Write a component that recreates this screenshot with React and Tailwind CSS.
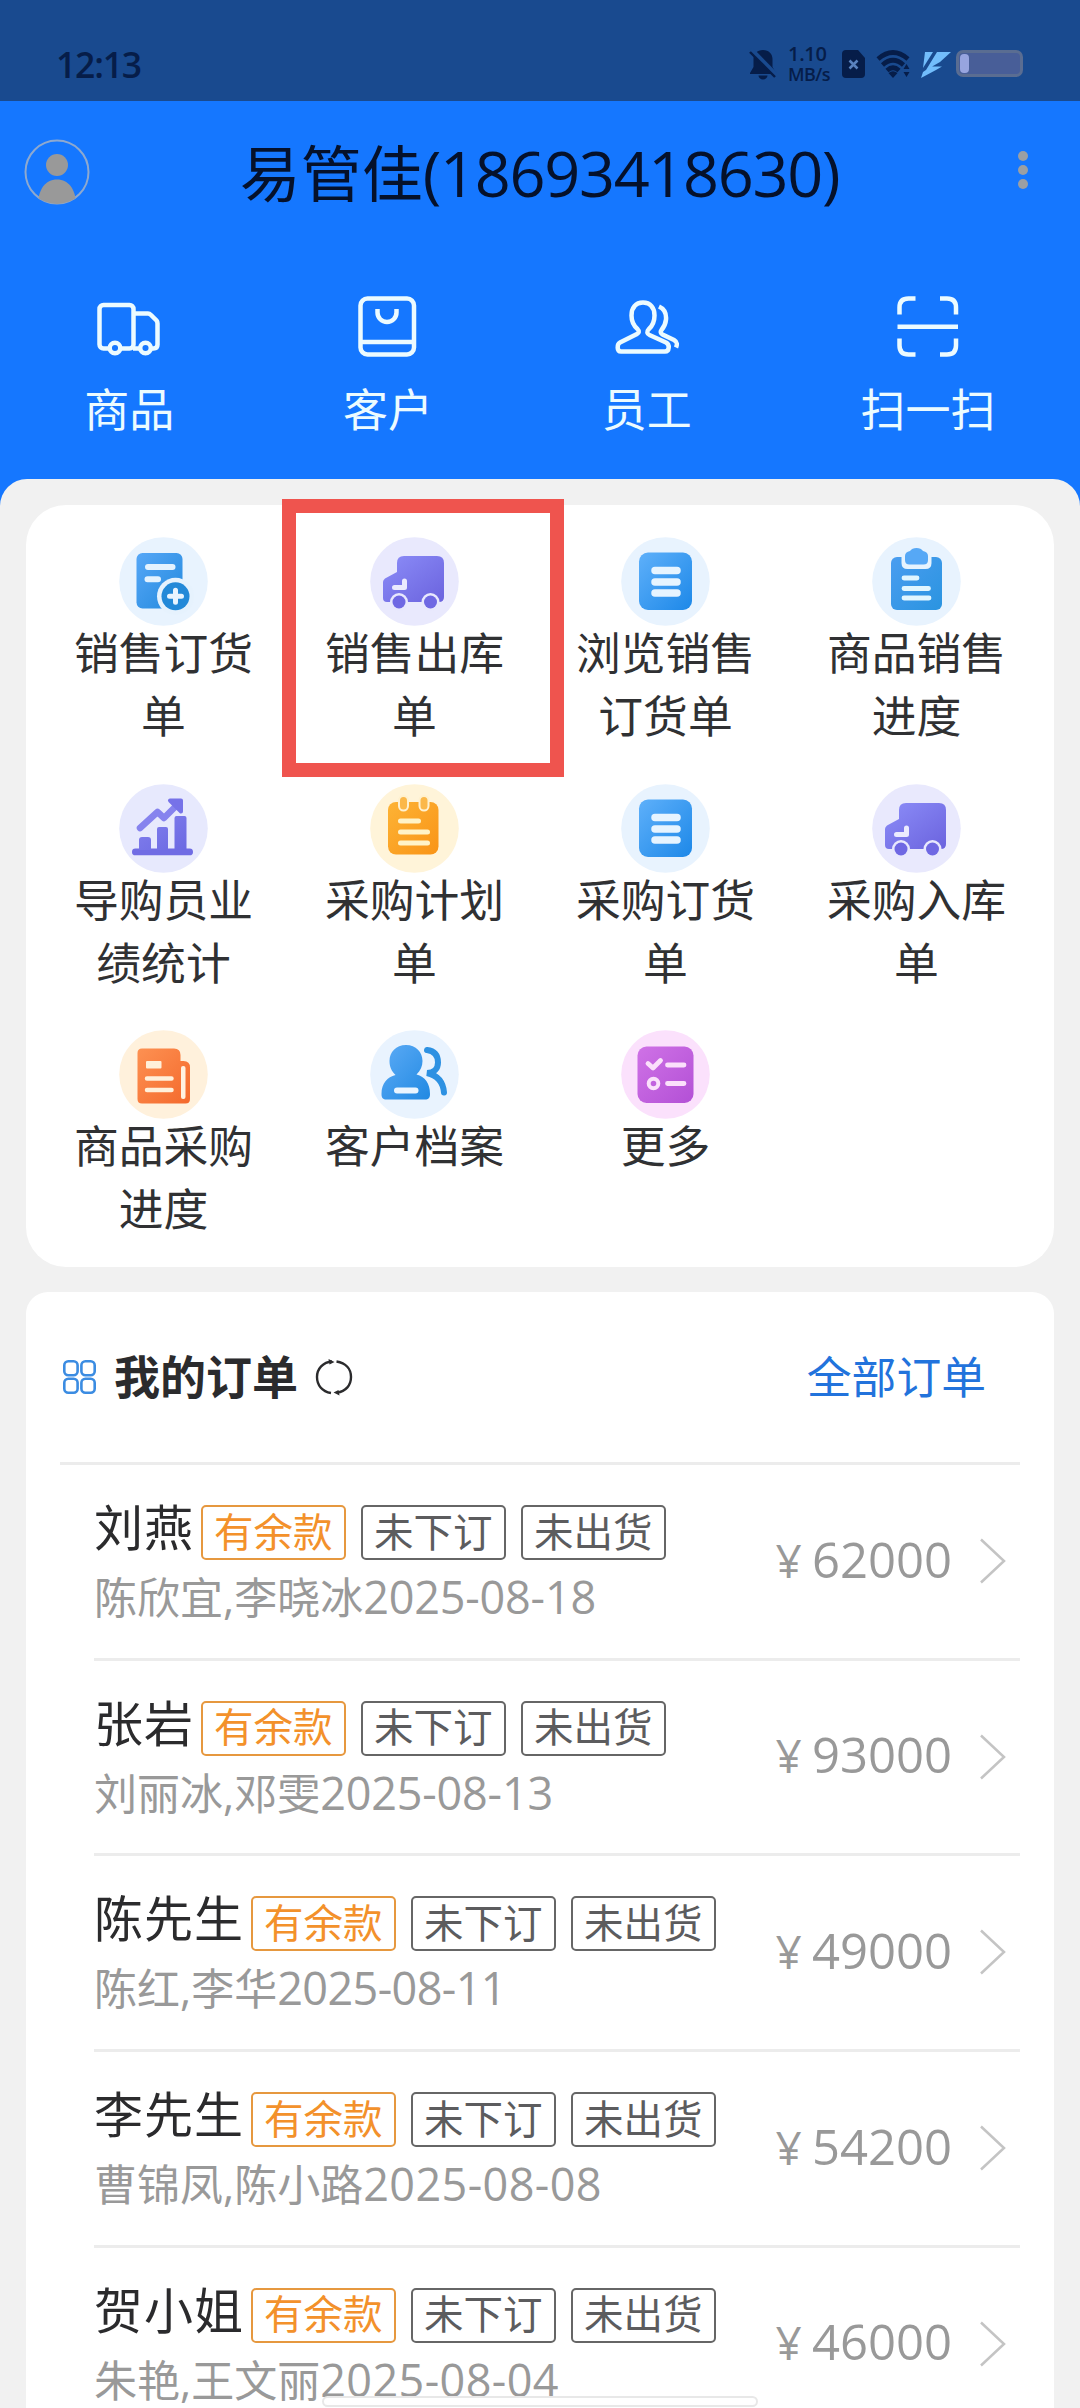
import React from "react";

function StatusBar() {
  return (
    <div className="flex h-[101px] items-center justify-between bg-[#194a8f] pl-[56px] pr-[57px] pt-[26px] text-[#061d49]">
      <div className="text-[35.500px] font-semibold leading-[48px] tracking-[-1.200px]">12:13</div>
      <div className="flex h-[48px] items-center">
        <svg width="28" height="32" viewBox="0 0 28 32">
          <path d="M14 2c-6 0-9.500 4-9.500 9v8L1 25v1h26v-1l-3.500-6v-8c0-5-3.500-9-9.500-9zM9.500 27.500a4.500 4 0 0 0 9 0z" fill="currentColor" />
          <path d="M1.500 1L28 28" stroke="#194a8f" strokeWidth="5" />
          <path d="M1 4L26 29" stroke="currentColor" strokeWidth="2.400" />
        </svg>
        <div className="ml-[11px] w-[44px] font-semibold">
          <div className="text-[20px] leading-[21px] tracking-[-0.3px]">1.10</div>
          <div className="text-[18px] leading-[20px] tracking-[-0.6px]">MB/s</div>
        </div>
        <svg className="ml-[10px]" width="24" height="30" viewBox="0 0 24 30">
          <path d="M4 1h12l7 8v16a4 4 0 0 1-4 4H4a4 4 0 0 1-4-4V5a4 4 0 0 1 4-4z" fill="currentColor" />
          <path d="M7.500 11.500l8 8m0-8l-8 8" stroke="#5a82bd" strokeWidth="2.500" />
        </svg>
        <svg className="ml-[10px]" width="36" height="30" viewBox="0 0 36 30" fill="none" stroke="currentColor" strokeWidth="4.600">
          <path d="M2 10Q17 -3 32 10M6.500 16Q17 6.500 27.500 16M11 21.500Q17 16 23 21.500" />
          <path d="M12.500 24Q17 20.500 21.500 24L17 29z" fill="currentColor" stroke="none" />
          <path d="M30.500 15l3 5h-6zM27.500 23h6l-3 5z" fill="currentColor" stroke="none" />
        </svg>
        <svg className="ml-[8px]" width="32" height="30" viewBox="0 0 32 30" fill="#72bdfb">
          <path d="M5 3h8L3 19zM17 3h14L20 13l-14 8zM11 17.500h11l-6 3.500L1 29l2-6z" />
        </svg>
        <div className="ml-[4px] flex h-[27px] w-[67px] items-center rounded-[7px] border-[3px] border-[#5a6d92] bg-[#485e98] pl-px">
          <div className="h-[19px] w-[9px] rounded-[4px] bg-[#97a5df]" />
        </div>
      </div>
    </div>
  );
}

function TitleBar() {
  return (
    <div className="flex h-[145px] items-center justify-between pl-[24px] pr-[52px]">
      <svg className="-mt-[4px]" width="66" height="66" viewBox="0 0 66 66">
        <defs>
          <clipPath id="avatar">
            <circle cx="33" cy="33" r="32" />
          </clipPath>
        </defs>
        <circle cx="33" cy="33" r="31.500" fill="none" stroke="#8ea9cf" strokeWidth="2" />
        <circle cx="33" cy="26" r="11" fill="#999" />
        <path d="M14 66c0-15 7-25.500 19-25.500S52 51 52 66z" fill="#999" clipPath="url(#avatar)" />
      </svg>
      <h1 className="flex items-baseline text-[61px] leading-[80px] text-[#05112b]">
        易管佳<span className="text-[63px] tracking-[-1.300px]">(18693418630)</span>
      </h1>
      <div className="-mt-[8px] flex w-[39px] flex-col items-end gap-[4px]">
        <i className="block size-[10px] rounded-full bg-[#9b9fa3]" />
        <i className="block size-[10px] rounded-full bg-[#9b9fa3]" />
        <i className="block size-[10px] rounded-full bg-[#9b9fa3]" />
      </div>
    </div>
  );
}

const quickIcons = {
  truck: (
    <>
      <rect x="2.500" y="11" width="34" height="43.500" rx="4" />
      <path d="M36.500 19.500h14.500q1.500 0 3 1.500l5.500 5.500q1 1.200 1 3v21q0 4-4 4H36" />
      <circle cx="18" cy="54" r="5.300" fill="#1577ff" />
      <circle cx="48.500" cy="54" r="5.300" fill="#1577ff" />
    </>
  ),
  bag: (
    <>
      <rect x="4.500" y="4.500" width="53.500" height="56" rx="7" />
      <path d="M4.500 48H58M21.500 15v3.500a9.500 9.500 0 0 0 19 0V15" />
    </>
  ),
  people: (
    <>
      <path d="M28 8.500c-7.500 0-11.500 5.500-11.500 13 0 6 2.500 10.500 6 13.500 2 2 1.500 4-.5 5L5 48.500c-3 1.500-3.500 9 1 9h44c4.500 0 5-7 1-9L34.500 41c-2.500-1-3-3.500-1-5.500 3.500-3 6-8 6-14 0-7.500-4-13-11.500-13z" />
      <path d="M44 12.500c5.500 2.500 7.500 7 7 13-.4 5-2.500 8-4.500 10.500-1.500 2-.5 3.500 1 4.500L59 46c3.500 2 3.500 4 2 7.500" />
    </>
  ),
  scan: (
    <path d="M3.500 20.500v-7q0-9 9-9H19.500M44 4.500h7q9 0 9 9v7M60 44.500v7q0 9-9 9h-7M19.500 60.500h-7q-9 0-9-9v-7M1.500 32.800H62" />
  ),
};

function QuickAction({ icon, label, className }) {
  return (
    <div className={"flex flex-col items-center text-[#ecfbff] " + className}>
      <svg width="64" height="64" viewBox="0 0 64 64" fill="none" stroke="currentColor" strokeWidth="4.500">
        {quickIcons[icon]}
      </svg>
      <div className="mt-[22px] text-[45px] leading-[60px]">{label}</div>
    </div>
  );
}

function Gradient({ id, from, to }) {
  return (
    <defs>
      <linearGradient id={id} x1="0" y1="0" x2="1" y2="1">
        <stop offset="0" stopColor={from} />
        <stop offset="1" stopColor={to} />
      </linearGradient>
    </defs>
  );
}

function AddDocIcon() {
  return (
    <>
      <Gradient id="addDoc" from="#56a7f7" to="#2389dd" />
      <rect x="17.500" y="16" width="46" height="55.500" rx="6" fill="url(#addDoc)" />
      <path d="M29 30h24.500M28.500 42.300h10.500" stroke="#e4f2fe" strokeWidth="6" strokeLinecap="round" />
      <circle cx="56.500" cy="59.300" r="18.500" fill="#e6f2fd" />
      <circle cx="56.500" cy="59.300" r="14" fill="#2389d8" />
      <path d="M50.500 59.300h12M56.500 53.300v12" stroke="#e8f4ff" strokeWidth="5" strokeLinecap="round" />
    </>
  );
}

function VanIcon() {
  return (
    <>
      <Gradient id="van" from="#8c8df8" to="#6b63de" />
      <path d="M27 35V26q0-7 7-7h33q7 0 7 7v34q0 5-5 5H17q-4 0-4-4V45q0-2 2-3.500z" fill="url(#van)" />
      <circle cx="29" cy="65" r="9" fill="#e8e8fd" />
      <circle cx="60.500" cy="65" r="9" fill="#e8e8fd" />
      <circle cx="29" cy="65" r="6.500" fill="#6f68e3" />
      <circle cx="60.500" cy="65" r="6.500" fill="#6f68e3" />
      <path d="M24.500 50.500H34.500V44" fill="none" stroke="#ebebfe" strokeWidth="5" strokeLinecap="round" strokeLinejoin="round" />
    </>
  );
}

function ListIcon() {
  return (
    <>
      <Gradient id="list" from="#5eb0fa" to="#1d88e8" />
      <rect x="18" y="15.500" width="53" height="57.500" rx="9" fill="url(#list)" />
      <path d="M34 33.500h22M34 45h22M34 56h22" stroke="#e6f4ff" strokeWidth="7.500" strokeLinecap="round" />
    </>
  );
}

function ClipboardIcon() {
  return (
    <>
      <Gradient id="clipboard" from="#4a9df0" to="#2a94e0" />
      <rect x="19" y="20" width="51" height="53" rx="6" fill="url(#clipboard)" />
      <path d="M29.500 18h30v8q0 6-6 6h-18q-6 0-6-6z" fill="#e6f3fe" />
      <path d="M33 19q0-4 5-5 2-3 6.500-3t6.500 3q5 1 5 5v4q0 4.500-4.500 4.500h-14Q33 27.500 33 23z" fill="#56a8f6" />
      <path d="M32 41h13M32 51.500h24.500M32 61h25" stroke="#e1f6ff" strokeWidth="4.800" strokeLinecap="round" />
    </>
  );
}

function ChartIcon() {
  return (
    <>
      <Gradient id="chart" from="#8380ee" to="#6b69e2" />
      <rect x="13" y="64.500" width="61" height="6.800" rx="3.400" fill="#706ce4" />
      <path d="M20 66V56q0-3 3-3h6q3 0 3 3v10zM38 66V45q0-2 2-2h7q2 0 2 2v21zM55.500 66V34q0-2 2-2h8q2 0 2 2v32z" fill="url(#chart)" />
      <path d="M21 44L38.500 28l6.500 6L59 20" fill="none" stroke="#8683ee" strokeWidth="6.500" strokeLinecap="round" strokeLinejoin="round" />
      <path d="M51 16.500h11v11z" fill="#7672e8" stroke="#7672e8" strokeWidth="4" strokeLinejoin="round" />
    </>
  );
}

function NotepadIcon() {
  return (
    <>
      <Gradient id="notepad" from="#fdb335" to="#f99417" />
      <rect x="18" y="18" width="50.500" height="52.500" rx="8" fill="url(#notepad)" />
      <rect x="29" y="12" width="9" height="14.500" rx="4.500" fill="#fbb84a" stroke="#fff1cf" strokeWidth="2" />
      <rect x="49.500" y="12" width="9" height="14.500" rx="4.500" fill="#fbb84a" stroke="#fff1cf" strokeWidth="2" />
      <path d="M30.500 37h18M30.500 48h27M30.500 59h27" stroke="#fff3c8" strokeWidth="5" strokeLinecap="round" />
    </>
  );
}

function InvoiceIcon() {
  return (
    <>
      <Gradient id="invoice" from="#fd9152" to="#f4692c" />
      <path d="M18.500 23q0-4.500 4.500-4.500h32q6.500 0 6.500 6.500v6h3q6.500 0 6.500 6.500V69q0 4.500-4.500 4.500H23q-4.500 0-4.500-4.500z" fill="url(#invoice)" />
      <rect x="62" y="36" width="4.500" height="33" rx="2" fill="#fff1e0" />
      <rect x="27" y="31" width="15.500" height="7.500" rx="1" fill="#fff0da" />
      <path d="M28 48.500h24.500M28 60h24.500" stroke="#fff0da" strokeWidth="4.500" strokeLinecap="round" />
    </>
  );
}

function CustomersIcon() {
  return (
    <>
      <Gradient id="customers" from="#5cabf6" to="#2189e2" />
      <path d="M57 20c8 1 11 6 11 12.500S64 43 57 43c9 2 16 8 17 19.500" fill="none" stroke="#2d91e2" strokeWidth="6" strokeLinecap="round" />
      <path d="M36 15c-10 0-16.500 7-16.500 16 0 6 2 10 6 14-8 2-14 8-14 19 0 4 1.500 5.500 5 5.500H55c3.500 0 5-1.500 5-5.500 0-11-5-17-13.500-19.500 4-4 6-8 6-13.500 0-9-6.500-16-16.500-16z" fill="url(#customers)" />
      <rect x="24" y="57.500" width="24.500" height="6" rx="3" fill="#eaf5ff" />
    </>
  );
}

function ChecklistIcon() {
  return (
    <>
      <Gradient id="checklist" from="#cf72e6" to="#b350d6" />
      <rect x="16.500" y="16.500" width="56" height="56.500" rx="9" fill="url(#checklist)" />
      <path d="M27 33.500l5 4.500 7.500-7.500M46.500 35h16.500M46.500 53.500h16.500" fill="none" stroke="#fbe0fb" strokeWidth="4.800" strokeLinecap="round" strokeLinejoin="round" />
      <circle cx="32.500" cy="53.500" r="4.800" fill="none" stroke="#fbe0fb" strokeWidth="4" />
    </>
  );
}

const menu = [
  { label: "销售订货单", tint: "#e8f3fe", Icon: AddDocIcon },
  { label: "销售出库单", tint: "#e9e9fd", Icon: VanIcon, highlighted: true },
  { label: "浏览销售订货单", tint: "#e8f3fe", Icon: ListIcon },
  { label: "商品销售进度", tint: "#e8f3fe", Icon: ClipboardIcon },
  { label: "导购员业绩统计", tint: "#e7e9fd", Icon: ChartIcon },
  { label: "采购计划单", tint: "#fff4d9", Icon: NotepadIcon },
  { label: "采购订货单", tint: "#e8f3fe", Icon: ListIcon },
  { label: "采购入库单", tint: "#e9e9fd", Icon: VanIcon },
  { label: "商品采购进度", tint: "#fff1dc", Icon: InvoiceIcon },
  { label: "客户档案", tint: "#e9f3fe", Icon: CustomersIcon },
  { label: "更多", tint: "#fbe1fc", Icon: ChecklistIcon },
];

function MenuItem({ label, tint, Icon, highlighted }) {
  return (
    <div className="relative flex h-[211px] flex-col items-center">
      {highlighted && (
        <div className="absolute -left-[7px] -top-[38.500px] h-[278px] w-[282px] border-[14px] border-[#ef544e]" />
      )}
      <svg width="89" height="89" viewBox="0 0 89 89">
        <circle cx="44.500" cy="44.500" r="44.300" fill={tint} />
        <Icon />
      </svg>
      <div className="-mt-[5px] w-[200px] text-center text-[44.8px] leading-[63px] text-[#303133]">{label}</div>
    </div>
  );
}

const orders = [
  { name: "刘燕", staff: "陈欣宜,李晓冰", date: "2025-08-18", amount: "62000" },
  { name: "张岩", staff: "刘丽冰,邓雯", date: "2025-08-13", amount: "93000" },
  { name: "陈先生", staff: "陈红,李华", date: "2025-08-11", amount: "49000" },
  { name: "李先生", staff: "曹锦凤,陈小路", date: "2025-08-08", amount: "54200" },
  { name: "贺小姐", staff: "朱艳,王文丽", date: "2025-08-04", amount: "46000" },
];

// Dates are spaced as in a face with a narrow figure one: more ones, tighter line.
const dateTracking = ["tracking-[0.4px]", "tracking-[-0.2px]", "tracking-[-0.6px]"];

function Tag({ children, tone }) {
  const colour = tone === "orange" ? "border-[#e6983f] text-[#f3912b]" : "border-[#666] text-[#5c5c5e]";
  return (
    <span className={"flex h-[55px] w-[145.500px] items-center justify-center rounded-[5px] border-2 pb-[2px] text-[39.5px] leading-[48px] " + colour}>
      {children}
    </span>
  );
}

function OrderRow({ name, staff, date, amount }) {
  const ones = date.split("1").length - 1;
  return (
    <div className="ml-[34px] flex h-[195.700px] shrink-0 justify-between border-b-[3px] border-[#ececec]">
      <div className="pt-[40px]">
        <div className="flex h-[55px] items-start">
          <span className="mr-[6.500px] text-[49px] leading-[45px] tracking-[1px] text-[#2b2b2d]">{name}</span>
          <div className="flex gap-[14.500px]">
            <Tag tone="orange">有余款</Tag>
            <Tag>未下订</Tag>
            <Tag>未出货</Tag>
          </div>
        </div>
        <div className="mt-[7px] flex items-baseline whitespace-nowrap text-[43px] leading-[60px] text-[#999]">
          {staff}
          <span className={"text-[45px] " + dateTracking[ones]}>{date}</span>
        </div>
      </div>
      <div className="flex h-[192px] items-center pr-[13px] text-[49px] leading-[60px] text-[#999]">
        <div className="-mt-[4px] flex items-baseline">
          <span className="mr-[10px] text-[46px]">¥</span>
          <span>{amount}</span>
        </div>
        <svg className="ml-[27px]" width="28" height="46" viewBox="0 0 28 46" fill="none" stroke="#c4c4c4" strokeWidth="2.500">
          <path d="M2 1.500L25 23 2 44.500" />
        </svg>
      </div>
    </div>
  );
}

function OrdersCard() {
  return (
    <section className="mt-[25px] flex h-[1140px] flex-col rounded-t-[22px] bg-white px-[34px]">
      <div className="flex h-[173px] shrink-0 items-center border-b-[3px] border-[#ececec] pl-[3px] pr-[34px]">
        <svg width="33" height="34" viewBox="0 0 33 34" fill="none" stroke="#3b8ce2" strokeWidth="2.600">
          <rect x="1.300" y="1.300" width="13.300" height="14" rx="4" />
          <rect x="18.400" y="1.300" width="13.300" height="14" rx="4" />
          <rect x="1.300" y="18.700" width="13.300" height="14" rx="4" />
          <rect x="18.400" y="18.700" width="13.300" height="14" rx="4" />
        </svg>
        <h2 className="-mt-[2px] ml-[18px] text-[46px] font-bold leading-[60px] text-[#2b2b2d]">我的订单</h2>
        <svg className="ml-[17px]" width="38" height="38" viewBox="0 0 38 38" fill="none" stroke="#2b2b2d" strokeWidth="2.400">
          <path d="M17 3.500C8 4 2 11 2 19s5 14.500 14 16M21.500 3.500C31 5 36 11 36 19s-5 14.500-14 15.500" />
          <path d="M13.500 1l6 3-5 2.500zM24.500 37.500l-6-3 5-2.500z" fill="#2b2b2d" stroke="none" />
        </svg>
        <a className="ml-auto text-[44.800px] leading-[60px] text-[#2273dc]">全部订单</a>
      </div>
      {orders.map((order) => (
        <OrderRow key={order.name} {...order} />
      ))}
    </section>
  );
}

export default function App() {
  return (
    <div className="relative h-[2408px] w-[1080px] overflow-hidden bg-[#1577ff] font-['Open_Sans','Noto_Sans_CJK_SC',sans-serif]">
      <StatusBar />
      <TitleBar />
      <nav className="flex h-[233px] pt-[48px]">
        <QuickAction icon="truck" label="商品" className="w-[258.700px]" />
        <QuickAction icon="bag" label="客户" className="w-[258.700px]" />
        <QuickAction icon="people" label="员工" className="w-[258.700px]" />
        <QuickAction icon="scan" label="扫一扫" className="flex-1" />
      </nav>
      <main className="rounded-t-[27px] bg-[#f1f1f1] px-[26px] pt-[26px]">
        <section className="grid h-[762px] grid-cols-4 content-start gap-y-[35.500px] rounded-[40px] bg-white px-[12px] pt-[32px]">
          {menu.map((item) => (
            <MenuItem key={item.label} {...item} />
          ))}
        </section>
        <OrdersCard />
      </main>
      <div className="absolute bottom-[1px] left-[322px] h-[11px] w-[436px] rounded-full border-2 border-[#e8e8e8] bg-white" />
    </div>
  );
}
